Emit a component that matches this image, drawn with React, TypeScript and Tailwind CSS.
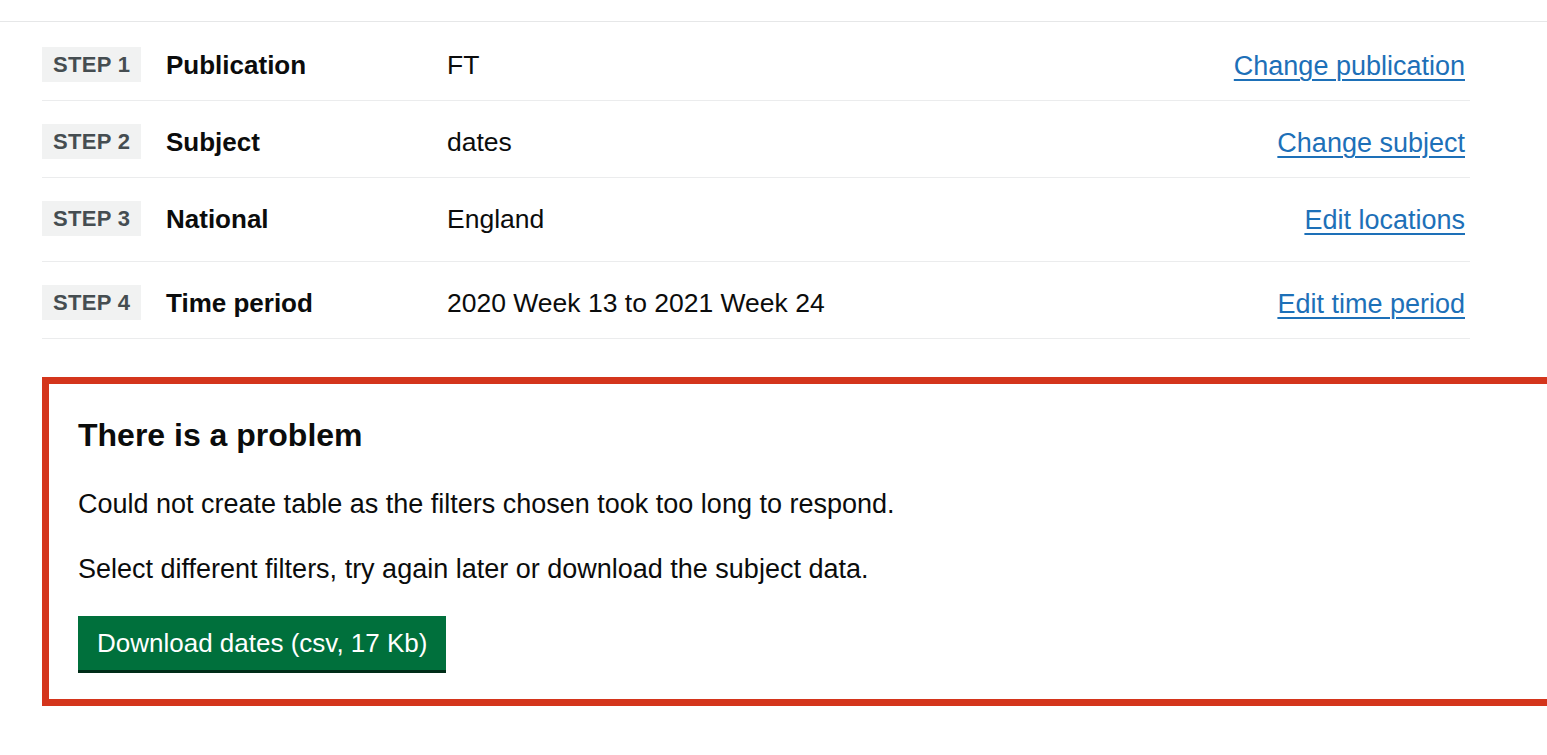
const steps = [
  { step: 1, label: 'Publication', value: 'FT', link: 'Change publication', pad: 'pt-[25px] pb-[18px]' },
  { step: 2, label: 'Subject', value: 'dates', link: 'Change subject', pad: 'pt-[23px] pb-[18px]' },
  { step: 3, label: 'National', value: 'England', link: 'Edit locations', pad: 'pt-[23px] pb-[25px]' },
  { step: 4, label: 'Time period', value: '2020 Week 13 to 2021 Week 24', link: 'Edit time period', pad: 'pt-[23px] pb-[18px]' },
]

export default function App() {
  return (
    <div className="min-h-screen w-full overflow-hidden bg-white font-['Liberation_Sans',Arial,sans-serif] text-[#0b0c0c]">
      {/* top rule */}
      <div className="h-[22px] border-b border-[#e6e7e8]" />

      {/* summary of chosen steps */}
      <dl className="ml-[42px] w-[1428px]">
        {steps.map((s) => (
          <div
            key={s.step}
            className={`grid grid-cols-[124px_281px_1fr_auto] items-center border-b border-[#ebeced] pr-[5px] ${s.pad}`}
          >
            <dt className="flex items-center">
              <span className="flex h-[35px] items-center bg-[#f1f2f2] px-[11px] text-[22px] font-bold tracking-[0.3px] text-[#454d51]">
                STEP {s.step}
              </span>
            </dt>
            <dt className="text-[26px] font-bold leading-[32px]">{s.label}</dt>
            <dd className="text-[26.5px] leading-[32px]">{s.value}</dd>
            <dd className="pt-[3px] text-right">
              <a
                href="#"
                className="text-[27px] leading-[32px] text-[#1d70b8] underline decoration-2 underline-offset-[4px]"
              >
                {s.link}
              </a>
            </dd>
          </div>
        ))}
      </dl>

      {/* error summary */}
      <div className="ml-[42px] mt-[38px] w-[1580px] border-[7px] border-[#d4351c] pb-[29px] pl-[29px] pt-[31px]">
        <h2 className="text-[32px] font-bold leading-[40px]">There is a problem</h2>
        <p className="mt-[33px] text-[27px] leading-[32px]">
          Could not create table as the filters chosen took too long to respond.
        </p>
        <p className="mt-[33px] text-[27px] leading-[32px]">
          Select different filters, try again later or download the subject data.
        </p>
        <button className="mt-[31px] flex h-[54px] items-center bg-[#00703c] px-[19px] text-[26px] text-white shadow-[0_3px_0_#002d18]">
          Download dates (csv, 17 Kb)
        </button>
      </div>
    </div>
  )
}
